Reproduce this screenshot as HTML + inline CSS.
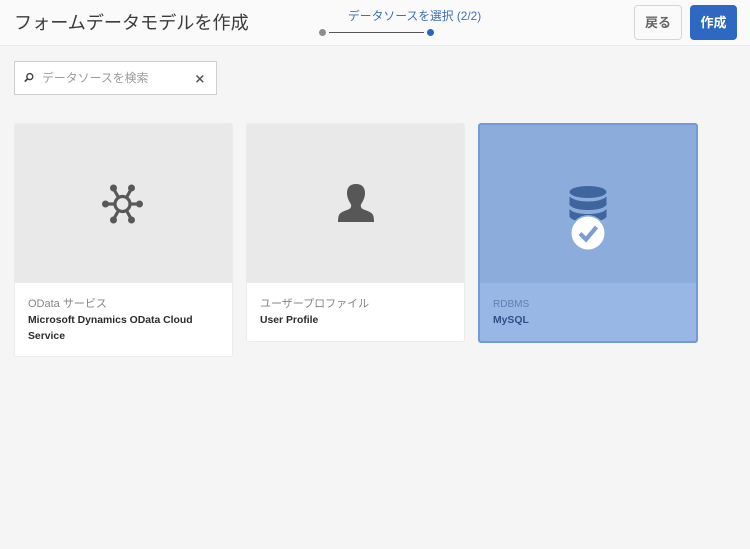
<!DOCTYPE html>
<html lang="ja"><head><meta charset="utf-8">
<style>
*{box-sizing:border-box}
html,body{margin:0;padding:0}
body{width:750px;height:549px;background:#f5f5f5;position:relative;overflow:hidden;font-family:"Liberation Sans","Noto Sans CJK JP",sans-serif}
.a{position:absolute;white-space:nowrap}
.card{position:absolute;top:123px;width:219px;background:#fff;border-radius:3px;border:1px solid #ebebeb;overflow:hidden}
.thumb{position:absolute;left:0;top:0;width:100%;height:159px;background:#e9e9e9}
.sub{position:absolute;left:13px;top:172px;font-size:11px;line-height:16px;color:#858585;white-space:nowrap}
.ttl{position:absolute;left:13px;top:189px;width:190px;font-size:10.4px;line-height:15.5px;font-weight:bold;color:#2c2c2c}
</style></head><body>
<div class="a" style="left:0;top:0;width:750px;height:46px;background:#fafafa;border-bottom:1px solid #eaeaea"></div>
<div class="a" style="left:14px;top:10px;font-size:18.1px;line-height:26px;color:#3c3c3c">フォームデータモデルを作成</div>
<div class="a" style="left:348px;top:8px;font-size:11.8px;line-height:16px;color:#3f6fb8">データソースを選択 (2/2)</div>
<div class="a" style="left:319px;top:29px;width:7px;height:7px;border-radius:50%;background:#8e8e8e"></div>
<div class="a" style="left:329px;top:32px;width:95px;height:1px;background:#555"></div>
<div class="a" style="left:427px;top:29px;width:7px;height:7px;border-radius:50%;background:#2a66c0"></div>
<div class="a" style="left:634px;top:5px;width:48px;height:35px;border:1px solid #d5d5d5;border-radius:4px;background:#fafafa;text-align:center;font-size:13px;line-height:33px;font-weight:bold;color:#666">戻る</div>
<div class="a" style="left:690px;top:5px;width:47px;height:35px;border-radius:4px;background:#2d69c2;text-align:center;font-size:13px;line-height:35px;font-weight:bold;color:#fff">作成</div>

<div class="a" style="left:14px;top:61px;width:203px;height:34px;background:#fff;border:1px solid #cfcfcf"></div>
<svg class="a" style="left:23px;top:72px" width="12" height="12" viewBox="0 0 12 12"><circle cx="6.8" cy="4.6" r="3" fill="none" stroke="#444" stroke-width="1.4"/><path d="M4.6 6.8L1.8 9.6" stroke="#444" stroke-width="1.7" fill="none"/></svg>
<div class="a" style="left:42px;top:70px;font-size:11.9px;line-height:16px;color:#9a9a9a">データソースを検索</div>
<svg class="a" style="left:195px;top:74px" width="10" height="10" viewBox="0 0 10 10"><path d="M1.5 1.500L8.200 8.200M8.200 1.500L1.500 8.200" stroke="#555" stroke-width="1.500" fill="none"/></svg>

<div class="card" style="left:14px;height:234px">
 <div class="thumb"></div>
 <svg class="a" style="left:85px;top:57px" width="44" height="46" viewBox="0 0 44 46"><g stroke="#585858" stroke-width="3.200" fill="none"><circle cx="22.500" cy="23" r="7.500"/><path d="M15 23H6M30 23H39M18.500 16.500L13.500 7.500M26.500 16.500L31.500 7.500M18.500 29.500L13.500 38.500M26.500 29.500L31.500 38.500"/></g><g fill="#585858"><circle cx="5.500" cy="23" r="3.500"/><circle cx="39.500" cy="23" r="3.500"/><circle cx="13.500" cy="7" r="3.500"/><circle cx="31.500" cy="7" r="3.500"/><circle cx="13.500" cy="39" r="3.500"/><circle cx="31.500" cy="39" r="3.500"/></g></svg>
 <div class="sub">OData サービス</div>
 <div class="ttl">Microsoft Dynamics OData Cloud Service</div>
</div>

<div class="card" style="left:246px;height:219px">
 <div class="thumb"></div>
 <svg class="a" style="left:87px;top:58px" width="44" height="44" viewBox="0 0 44 44"><path d="M22 2C15.500 2 13 6 13 11C13 15 14.500 18.500 16.500 21.500C17.500 23 17.500 25 16 26.500C13.500 28.500 7 29 5 33C4.300 34.500 4 37 4 40H40C40 37 39.700 34.500 39 33C37 29 30.500 28.500 28 26.500C26.500 25 26.500 23 27.500 21.500C29.500 18.500 31 15 31 11C31 6 28.500 2 22 2Z" fill="#575757"/></svg>
 <div class="sub">ユーザープロファイル</div>
 <div class="ttl">User Profile</div>
</div>

<div class="card" style="left:478px;height:220px;width:220px;background:#99b7e5;border:2px solid #7199dc">
 <div class="thumb" style="height:158px;background:#8cacdc"></div>
 <svg class="a" style="left:78px;top:58px" width="60" height="68" viewBox="0 0 60 68"><g fill="#3f659e"><ellipse cx="30" cy="9" rx="18.500" ry="6"/><path d="M11.500 13.500C15 17 23 18.500 30 18.500C37 18.500 45 17 48.500 13.500V22C45 26 37 27 30 27C23 27 15 26 11.500 22Z"/><path d="M11.500 26C15 30 23 31 30 31C37 31 45 30 48.500 26V34C45 38 37 39 30 39C23 39 15 38 11.500 34Z"/></g><circle cx="30" cy="50" r="18" fill="#8cacdc"/><circle cx="30" cy="50" r="16.500" fill="#fff"/><path d="M22 50.500L28 56.500L38.500 44" stroke="#7b9dd0" stroke-width="4.200" fill="none"/></svg>
 <div class="sub" style="left:13px;top:172px;color:#5f7fb0;font-size:10px">RDBMS</div>
 <div class="ttl" style="top:188px;color:#2f5087">MySQL</div>
</div>
</body></html>
